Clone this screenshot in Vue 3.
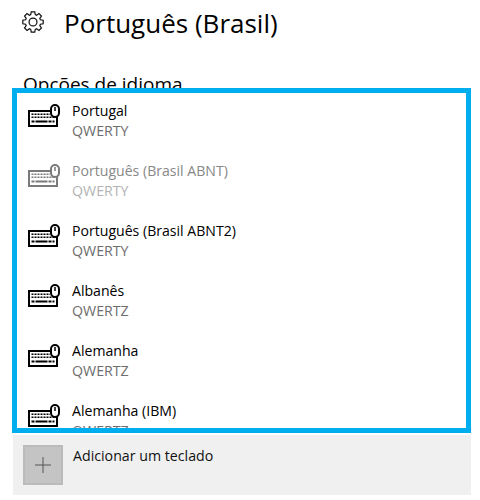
<template>
  <div class="page">
    <header class="title-row">
      <svg class="gear" viewBox="0 0 20 20" width="22" height="22" fill="none" stroke="#111" stroke-width="1.100">
        <path :d="gearPath" />
        <circle cx="10" cy="10" r="3.600" />
      </svg>
      <h1>Português (Brasil)</h1>
    </header>
    <div class="section-clip"><h2>Opções de idioma</h2></div>
    <div class="frame">
      <div v-for="kb in keyboards" :key="kb.name" class="row" :class="{ disabled: kb.disabled }">
        <svg class="kb-icon" viewBox="0 0 32 25" width="32" height="25">
          <path d="M23 8H1V23H29V14" fill="none" stroke="currentColor" stroke-width="2" />
          <path d="M3.500 11.250H22M3.500 14.250H26.500" stroke="currentColor" stroke-width="1.500" stroke-dasharray="2 1" fill="none" />
          <path d="M3.500 18.500H26.500" stroke="currentColor" stroke-width="2" stroke-dasharray="3 1 12 1 3 1" fill="none" />
          <rect x="23" y="2" width="8" height="12" rx="4" fill="#fff" stroke="currentColor" stroke-width="2" />
          <path d="M27 4v4" stroke="currentColor" stroke-width="1.500" />
        </svg>
        <div class="labels">
          <div class="name">{{ kb.name }}</div>
          <div class="layout">{{ kb.layout }}</div>
        </div>
      </div>
    </div>
    <div class="add-row">
      <div class="plus-tile">
        <svg viewBox="0 0 16 16" width="16" height="16"><path d="M8 0v16M0 8h16" stroke="#555" stroke-width="1" /></svg>
      </div>
      <span class="add-label">Adicionar um teclado</span>
    </div>
  </div>
</template>

<script setup>
const keyboards = [
  { name: 'Portugal', layout: 'QWERTY' },
  { name: 'Português (Brasil ABNT)', layout: 'QWERTY', disabled: true },
  { name: 'Português (Brasil ABNT2)', layout: 'QWERTY' },
  { name: 'Albanês', layout: 'QWERTZ' },
  { name: 'Alemanha', layout: 'QWERTZ' },
  { name: 'Alemanha (IBM)', layout: 'QWERTZ' }
]

// eight-toothed settings gear
function buildGear() {
  const pts = []
  for (let i = 0; i < 8; i++) {
    const a = (i * Math.PI) / 4
    const offsets = [[-0.3, 7], [-0.17, 9.4], [0.17, 9.4], [0.3, 7]]
    for (const [da, r] of offsets) {
      pts.push((10 + r * Math.sin(a + da)).toFixed(2) + ' ' + (10 - r * Math.cos(a + da)).toFixed(2))
    }
  }
  return 'M' + pts.join('L') + 'Z'
}
const gearPath = buildGear()
</script>

<style scoped>
.page {
  width: 480px;
  height: 500px;
  overflow: hidden;
  background: #fff;
  font-family: "Open Sans", "Noto Sans", sans-serif;
  color: #000;
}
.title-row { display: flex; align-items: center; height: 46px; padding-left: 22px; }
.gear { flex: none; margin-top: -2px; }
h1 { margin: 0 0 0 20px; font-size: 26px; font-weight: 400; line-height: 46px; }
.section-clip { height: 42px; overflow: hidden; padding-left: 23px; }
h2 { margin: 25px 0 0; font-size: 19px; font-weight: 400; line-height: 26px; }
.frame {
  margin-left: 12px;
  width: 459px;
  height: 345px;
  box-sizing: border-box;
  border: 5px solid #00adef;
  overflow: hidden;
  background: #fff;
}
.row { display: flex; height: 60px; padding: 8px 0 0 11px; box-sizing: border-box; color: #000; }
.row.disabled { color: #7a7a7a; }
.kb-icon { flex: none; margin-top: 2px; }
.labels { margin-left: 12px; }
.name { font-size: 14.100px; line-height: 20px; }
.layout { font-size: 14.200px; line-height: 20px; color: #6d6d6d; }
.row.disabled .name { color: #888; }
.row.disabled .layout { color: #b3b3b3; }
.add-row {
  margin: 2px 0 0 13px;
  width: 458px;
  height: 60px;
  background: #f0f0f0;
  display: flex;
  padding: 10px 0 0 10px;
  box-sizing: border-box;
}
.plus-tile {
  width: 40px;
  height: 40px;
  box-sizing: border-box;
  background: #c4c4c4;
  border: 2px solid #bbb;
  display: flex;
  align-items: center;
  justify-content: center;
}
.add-label { margin-left: 10px; font-size: 14.200px; line-height: 22px; color: #111; }
</style>
